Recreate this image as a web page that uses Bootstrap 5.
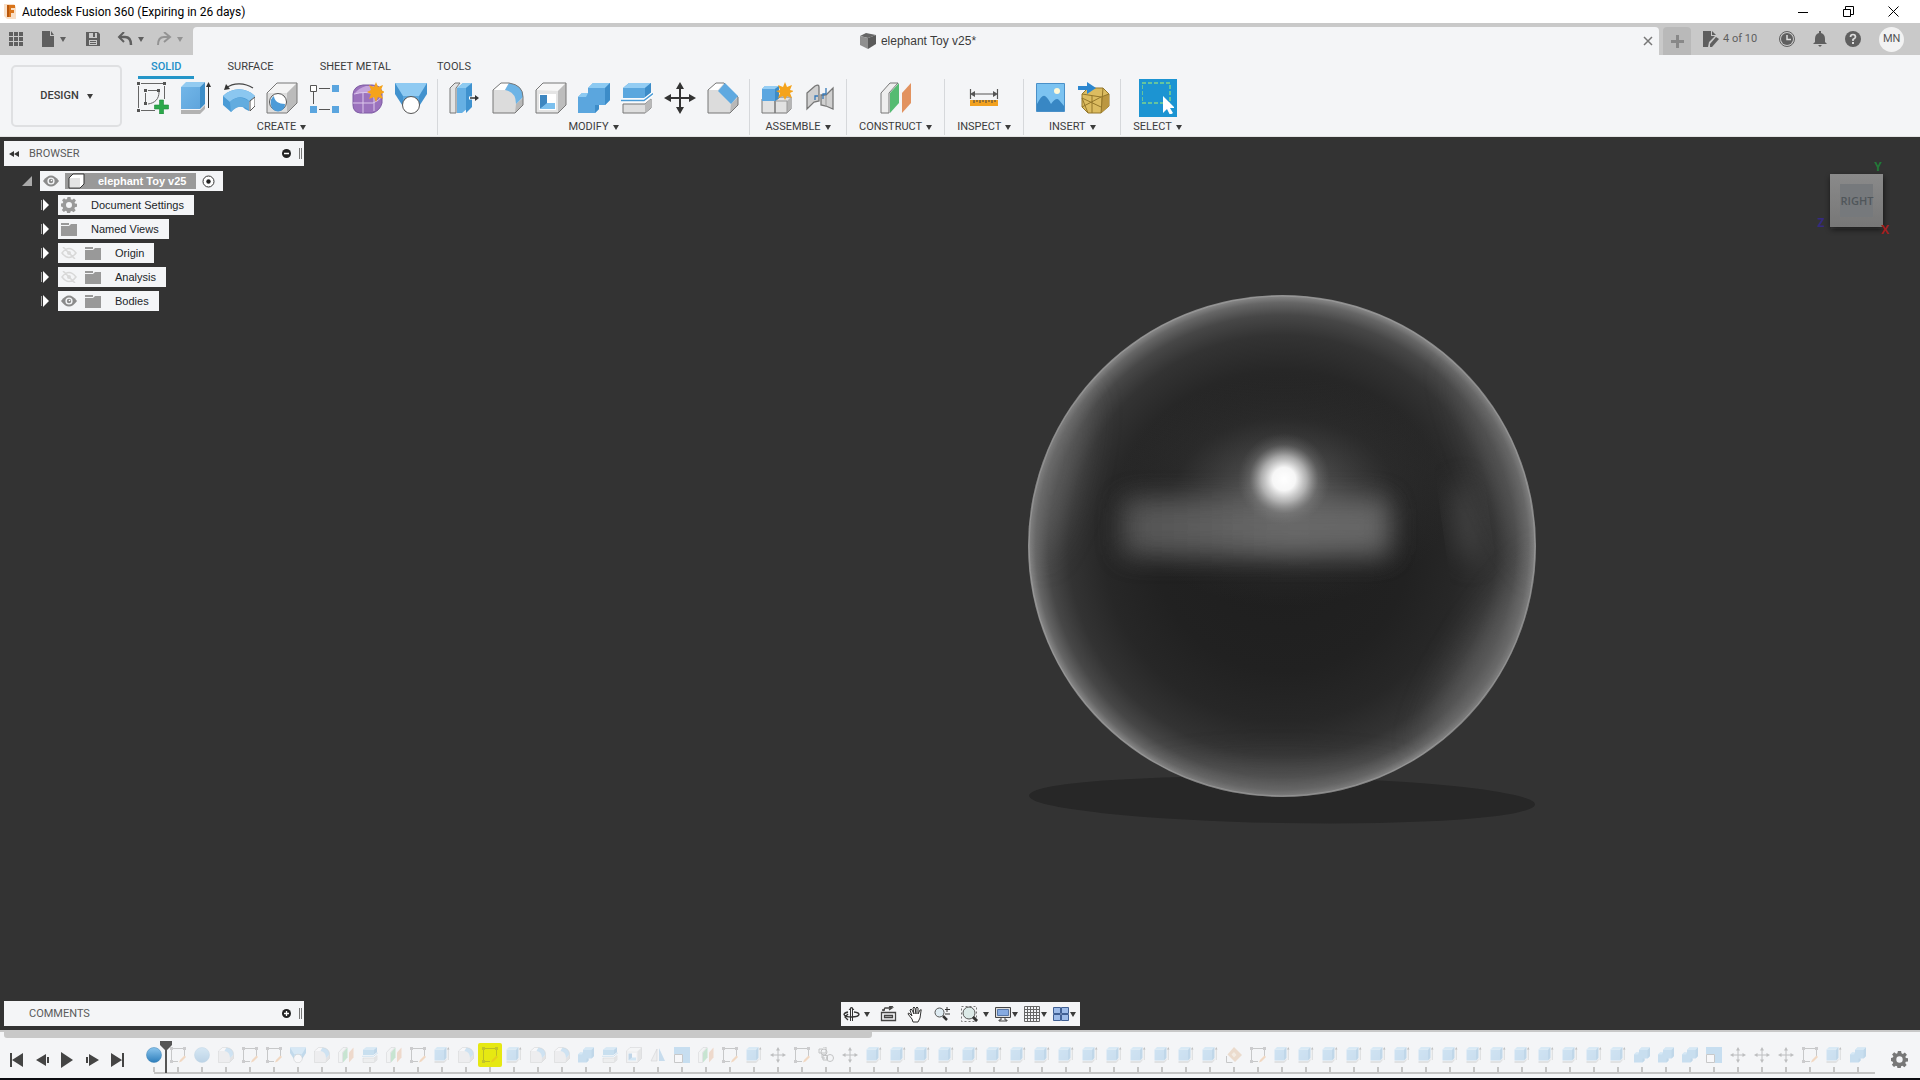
<!DOCTYPE html>
<html lang="en">
<head>
<meta charset="utf-8">
<meta name="viewport" content="width=device-width, initial-scale=1">
<title>Autodesk Fusion 360</title>
<link href="https://cdn.jsdelivr.net/npm/bootstrap@5.3.0/dist/css/bootstrap.min.css" rel="stylesheet">
<style>
body{font-family:Roboto,"Liberation Sans",sans-serif;font-size:11px;line-height:16px;color:#3c3c3c;background:#f4f5f7;overflow:hidden}
svg{display:block;flex:none}
button{border:0;background:none;padding:0;color:inherit;font:inherit}
.tri{display:inline-block;flex:none;width:0;height:0;border:3px solid transparent;border-top:5px solid currentColor;border-bottom:0}
.title-bar{height:23px;background:#fff;color:#000;font-size:12px}
.win-btn{width:45px;height:20px}
.quick-bar{height:32px;background:#c9c9c9;color:#5f5f5f}
.quick-tools{width:193px;padding-left:9px}
.doc-tab{height:28px;background:#f4f5f7;border-radius:4px 4px 0 0;font:12px/16px "Liberation Sans",sans-serif;color:#3c3c3c}
.tab-close{width:16px;color:#777}
.tab-plus{width:28px;height:28px;background:#b9b9b9;border-radius:4px 4px 0 0;color:#888}
.account-tools{width:261px}
.account-icons{gap:18px;padding:4px 0 0 12px}
.avatar{width:25px;height:25px;background:#f2f2f2;font-size:11px;color:#555}
.ribbon{height:82px;background:#f4f5f7;border-bottom:1px solid #e4e4e4}
.design-btn{width:111px;height:62px;border:2px solid #dfe0e2;border-radius:5px;font-weight:500;font-size:11px;margin:10px 4px 0 11px}
.ribbon-tabs{height:24px;gap:20px;padding-left:12px}
.ribbon-tabs .nav-link{padding:4px 13px 1px;color:#3c3c3c;height:24px;border-bottom:3px solid transparent}
.ribbon-tabs .nav-link.active{color:#1f8fc8;border-color:#2596c8;font-weight:500}
.tool-group{padding:0 5px;border-right:1px solid #d6d8db;height:56px;gap:2px}
.tool-group:last-child{border:0}
.tool-btn{width:43px;height:38px}
.tool-btn.chosen{width:38px;background:#1c94d2}
.group-label{padding:0 7px;height:16px}
.stage{background:#333;min-height:0}
.scene{position:absolute;inset:0;width:100%;height:100%}
.panel-bar{width:300px;height:25px;background:#f4f5f7;color:#5a5a5a;padding:0 2px 0 5px}
.panel-name{padding-left:9px}
.panel-name.alone{padding-left:20px}
.grip{width:3px;height:11px;border-left:1px solid #777;border-right:1px solid #777}
.tree{font:11px/16px "Liberation Sans",sans-serif;gap:4px;padding-top:5px}
.tree-row{height:20px;padding-left:25px}
.tree-row.root{padding-left:18px}
.tree-item{height:20px;background:#f4f5f7;padding:0 10px 0 3px;color:#999;gap:14px}
.tree-item.top{padding:0 8px 0 3px;gap:6px}
.chip{background:#999;color:#fff;height:16px;padding:0 10px 0 3px;gap:13px;font-weight:700}
.view-tools{height:24px;background:#f4f5f7;padding:0 4px 0 2px;color:#3c3c3c;gap:6px}
.timeline{height:48px;background:#f4f5f7;border-top:2px solid #c8c8c8}
.scroll-thumb{width:868px;height:6px;background:#c8c8c8;border-radius:0 0 3px 3px;margin-left:4px}
.play-ctl{width:142px;padding:0 18px 0 10px;height:24px;margin-top:10px;color:#444}
.settings-btn{margin:13px 12px 0 auto;color:#777}
.track{padding-top:5px}
.step{width:24px;height:29px;flex:none}
.step svg{opacity:.28;margin:4px}
.step.on svg{opacity:1}
.step .slot{height:24px}
.step.hot .slot{background:#e6e812;border-radius:2px}
.step .tick{width:2px;height:5px;background:#c4c4c4}
.rail{height:2px;background:#c4c4c4;margin:0 -5px 0 12px}
.marker{position:absolute;left:18px;top:3px;z-index:2}
.foot{height:2px;background:#0c0d12}
</style>
<script src="https://cdn.jsdelivr.net/npm/bootstrap@5.3.0/dist/js/bootstrap.bundle.min.js"></script>
</head>
<body class="vh-100 d-flex flex-column">

<svg width="0" height="0" class="position-absolute" aria-hidden="true">
 <defs>
  <linearGradient id="gFront" x1="0" y1="0" x2="1" y2="1"><stop offset="0" stop-color="#72b6e8"/><stop offset="1" stop-color="#5fa5dc"/></linearGradient>
  <linearGradient id="gBall" x1="0" y1="0" x2="0" y2="1"><stop offset="0" stop-color="#8cc6ee"/><stop offset="1" stop-color="#2d7ebc"/></linearGradient>
 </defs>
 <symbol id="i-sketch" viewBox="0 0 32 32"><path d="M4 1.500h22M1.500 4v22M27.500 4v13M4 28.500h14M11 8.500h9M8.500 11v9M22 10c0 7-4 11-11 12" fill="none" stroke="#666" stroke-width="1"/><path d="M0 0h3v3H0zM26 0h3v3h-3zM0 27h3v3H0zM7 7h3v3H7zM20 7h3v3h-3zM7 20h3v3H7z" fill="#555"/><path d="M22.500 18h4v5h5v4h-5v5h-4v-5h-5v-4h5z" fill="#2ba84a" stroke="#1d8a3a" stroke-width=".6"/></symbol>
 <symbol id="i-extrude" viewBox="0 0 32 32"><path d="M1 28h19l5-5v4l-5 5H1z" fill="#b2b2b2"/><path d="M1 5h19v22H1z" fill="url(#gFront)"/><path d="M1 5l5-5h19l-5 5z" fill="#93cbf1"/><path d="M20 5l5-5v22l-5 5z" fill="#3c8dc8"/><path d="M28.500 4v22" stroke="#333" fill="none"/><path d="M26 5l2.500-5L31 5z" fill="#333"/></symbol>
 <symbol id="i-revolve" viewBox="0 0 32 32"><path d="M0 14c9-9 23-9 32 0l-6 6v9l-4-2c-4-4-9-3-14 3l-8-7z" fill="#4a9bd6"/><path d="M0 14c9-9 23-9 32 0l-6 5c-5-5-13-5-19 1z" fill="#8bc7f0"/><path d="M7 20c6-6 13-5 19-1v9c-6-5-12-4-18 2z" fill="#62acdf"/><path d="M27 19l5-4v9l-5 5z" fill="#fff" stroke="#555"/><path d="M3 6C11 0 22 1 30 6" fill="none" stroke="#444" stroke-width="1.200"/><path d="M1 8l2-6 4 5z" fill="#333"/></symbol>
 <symbol id="i-hole" viewBox="0 0 32 32"><path d="M1 11L11 1h20v20L21 31H1z" fill="#ddd"/><path d="M1 11L11 1h20L21 11z" fill="#f4f4f4"/><path d="M21 11L31 1v20L21 31z" fill="#bbb"/><path d="M1 11L11 1h20v20L21 31H1z" fill="none" stroke="#777"/><circle cx="12" cy="20" r="8.500" fill="#fff" stroke="#555"/><path d="M8 14c0 5 5 8 11 8a7 7 0 0 1-14 1c-1-4 0-7 3-9z" fill="#4c9bd8"/></symbol>
 <symbol id="i-pattern" viewBox="0 0 32 32"><path d="M4.500 10v12M10 6.500h11M10 27.500h11" stroke="#555" fill="none"/><path d="M1.500 3.500h6v6h-6z" fill="#fff" stroke="#555"/><path d="M23 3h7v7h-7zM1 24h7v7H1zM23 24h7v7h-7z" fill="#5aa5df"/></symbol>
 <symbol id="i-form" viewBox="0 0 32 32"><path d="M1 12q1-8 10-9h9q10 0 10 9v9q-2 8-10 10H8q-7-1-7-8z" fill="#9b72bd" stroke="#7d5aa3"/><path d="M3 11q4-5 11-7h8q-2 5-7 7z" fill="#c4a4dc"/><path d="M1 21h20q6-2 9-7M11 11v20M2 12q12-3 20 0v17M22 12l6-5" fill="none" stroke="#dcc8ec"/><path d="M24 0l2 5 5-2-2 5 4 2-4 2 2 5-5-2-2 5-2-5-5 2 2-5-4-2 4-2-2-5 5 2z" fill="#f5a31b"/></symbol>
 <symbol id="i-loft" viewBox="0 0 32 32"><path d="M0 1h32v11l-9 14H9L0 12z" fill="#4292ce"/><path d="M0 1h32l-8 13H8z" fill="#8fcaf2"/><path d="M8 14h16v10H8z" fill="#5ca7dd"/><circle cx="16" cy="23" r="8.500" fill="#fff" stroke="#555"/></symbol>
 <symbol id="i-press" viewBox="0 0 32 32"><path d="M1 6l5-5h5L7 6v25H1z" fill="#e4e4e4" stroke="#777"/><path d="M8 6l6-5h9l-4 5v20l-6 5H8z" fill="#66b0e4"/><path d="M8 6l6-5h9l-6 5z" fill="#8ecbf1"/><path d="M17 6l6-5v24l-6 6z" fill="#3f92cf"/><path d="M20 16h8" stroke="#fff" stroke-width="3"/><path d="M21 16h6" stroke="#333" stroke-width="1.500"/><path d="M26 13l4 3-4 3z" fill="#333"/></symbol>
 <symbol id="i-fillet" viewBox="0 0 32 32"><path d="M1 8l8-7h8q14 2 14 14v8l-8 8H1z" fill="#dcdcdc"/><path d="M1 8l8-7h8l-4 7z" fill="#fff"/><path d="M24 22l7-6v7l-8 8z" fill="#b8b8b8"/><path d="M17 1q14 2 14 14l-7 7q0-12-11-14z" fill="#6db4e6"/><path d="M1 8l8-7h8q14 2 14 14v8l-8 8H1z" fill="none" stroke="#777"/></symbol>
 <symbol id="i-shell" viewBox="0 0 32 32"><path d="M1 8l7-7h23v22l-8 8H1z" fill="#e4e4e4"/><path d="M1 8l7-7h23l-8 8z" fill="#f6f6f6"/><path d="M23 9l8-8v22l-8 8z" fill="#bdbdbd"/><path d="M1 8l7-7h23v22l-8 8H1z" fill="none" stroke="#777"/><path d="M4 12h17v16H4z" fill="#fff"/><path d="M5 13h7v9l-7 5z" fill="#3d86c0"/><path d="M5 27l7-6h8v6z" fill="#7cc0ee"/></symbol>
 <symbol id="i-combine" viewBox="0 0 32 32"><path d="M0 15l4-4h6V6l5-5h17v17l-5 5h-6v4l-4 4H0z" fill="#5ba6de"/><path d="M10 6l5-5h17l-5 5zM0 15l4-4h6l-2 4z" fill="#8ccaf2"/><path d="M27 6l5-5v17l-5 5zM17 23h4v4l-4 4z" fill="#3c8cc8"/></symbol>
 <symbol id="i-split" viewBox="0 0 32 32"><path d="M2 22h22l6-5v9l-6 5H2z" fill="#dedede" stroke="#777"/><path d="M24 22l6-5v9l-6 5z" fill="#b9b9b9"/><path d="M2 6l6-5h22v10l-6 5H2z" fill="#5ba7de"/><path d="M2 6l6-5h22l-6 5z" fill="#94cdf3"/><path d="M24 6l6-5v10l-6 5z" fill="#3c8cc8"/><path d="M0 18.500h23l9-7" fill="none" stroke="#fff" stroke-width="4"/><path d="M0 18.500h23l9-7" fill="none" stroke="#4a9bd6" stroke-width="1.500"/></symbol>
 <symbol id="i-move" viewBox="0 0 32 32"><path d="M16 5v22M5 16h22" stroke="#333" stroke-width="2"/><path d="M16 0l4 7h-8zM16 32l4-7h-8zM0 16l7-4v8zM32 16l-7-4v8z" fill="#333"/></symbol>
 <symbol id="i-chamfer" viewBox="0 0 32 32"><path d="M1 8l8-7h8l14 14v8l-8 8H1z" fill="#dcdcdc"/><path d="M1 8l8-7h8l-6 7z" fill="#fff"/><path d="M24 22l7-7v8l-8 8z" fill="#b8b8b8"/><path d="M1 8l8-7h8l14 14v8l-8 8H1z" fill="none" stroke="#777"/><path d="M18 1l13 13-7 8L11 9z" fill="#5fa9e0"/></symbol>
 <symbol id="i-component" viewBox="0 0 32 32"><path d="M1 17h13v14H1zM14 19l5-4h11v12l-4 4H14z" fill="#e2e2e2" stroke="#777"/><path d="M26 19l4-4v12l-4 4z" fill="#b5b5b5"/><path d="M14 19h12v12" fill="none" stroke="#999"/><path d="M1 7l3-3h14v12l-4 3H1z" fill="#5ba6e0"/><path d="M1 7l3-3h14l-4 3z" fill="#96cef4"/><path d="M14 7l4-3v12l-4 3z" fill="#3c8cc8"/><path d="M24 0l2 5 5-2-2 5 4 1-4 2 2 5-5-2-2 4-2-4-5 2 2-5-4-2 4-1-2-5 5 2z" fill="#f5a31b"/></symbol>
 <symbol id="i-joint" viewBox="0 0 32 32"><path d="M3 11l8-7q4-2 4 1v14l-5 1-7 7zM29 6v21l-7-3-5-1V13h5z" fill="#d0d0d0" stroke="#777" stroke-width="1.300"/><path d="M22 13v11" stroke="#999"/><path d="M14 14h-3v4M19 17v-5h3V6" stroke="#3478b8" fill="none" stroke-width="1.300"/></symbol>
 <symbol id="i-plane" viewBox="0 0 32 32"><path d="M1 11L10 1h8L9 11v20H1z" fill="#eee" stroke="#777"/><path d="M10 11l9-10v20l-9 10z" fill="#55bb72"/><path d="M22 11l9-10v20l-9 10z" fill="#e2925f"/></symbol>
 <symbol id="i-measure" viewBox="0 0 32 32"><path d="M2.500 7v10M29.500 7v10M4 12h24" stroke="#555" stroke-width="1.200"/><path d="M2 12l5-3v6zM30 12l-5-3v6z" fill="#555"/><path d="M2 18h28v6H2z" fill="#f2a11f"/><path d="M6 18v3M9 18v2M12 18v3M15 18v2M18 18v3M21 18v2M24 18v3M27 18v2" stroke="#444"/></symbol>
 <symbol id="i-image" viewBox="0 0 32 32"><path d="M1.500 1.500h28v28h-28z" fill="#7cc3f1" stroke="#4a90c8"/><path d="M2 22q5-10 8-8t6 8q5-7 8-4l5 6v5H2z" fill="#3887c4"/><circle cx="22" cy="9" r="3" fill="#fff9d8"/></symbol>
 <symbol id="i-mesh" viewBox="0 0 32 32"><path d="M4 12l6-6h15l6 6v12l-8 7H10l-6-6z" fill="#dcbc60" stroke="#94772a"/><path d="M23 15l8-3v12l-8 7z" fill="#bb9740"/><path d="M4 12l19 3 8-3M25 6l-2 25M4 25l19-10M10 31L4 16l19 9M14 14v17" fill="none" stroke="#94772a"/><path d="M0 4h9V0l9 6-9 6V8H0z" fill="#2c86cf"/></symbol>
 <symbol id="i-select" viewBox="0 0 32 32"><path d="M0 1h28v20H0z" fill="none" stroke="#7fd48c" stroke-width="1.500" stroke-dasharray="4 2"/><path d="M21 14v17l4-4 3 6 3-2-3-5h5z" fill="#fff"/></symbol>
 <symbol id="i-tsketch" viewBox="0 0 32 32"><path d="M5 3h23M3 5v21M29 5v14M5 29h11" fill="none" stroke="#555" stroke-width="2"/><path d="M0 0h6v6H0zM26 0h6v6h-6zM0 26h6v6H0z" fill="#666"/><path d="M18 31l2-5 9-9 3 3-9 9z" fill="#ec8e3b"/></symbol>
 <symbol id="i-ball" viewBox="0 0 32 32"><circle cx="16" cy="16" r="15" fill="url(#gBall)" stroke="#3b80b4"/></symbol>
 <symbol id="i-mirror" viewBox="0 0 32 32"><path d="M14 4v24H2z" fill="#ddd" stroke="#666"/><path d="M18 2v26h12z" fill="#569fd6"/></symbol>
 <symbol id="i-scale" viewBox="0 0 32 32"><path d="M0 0h32v32H18V14H0z" fill="#55a6e0"/><path d="M1 15h16v16H1z" fill="#fff" stroke="#555" stroke-width="2"/></symbol>
 <symbol id="i-group" viewBox="0 0 32 32"><path d="M10 0h6v12H2V4h8M8 14v8h6" fill="none" stroke="#444" stroke-width="2"/><circle cx="12" cy="10" r="6" fill="none" stroke="#444" stroke-width="2"/><circle cx="24" cy="22" r="7" fill="none" stroke="#444" stroke-width="2"/><path d="M10 17h9v9h-9z" fill="none" stroke="#444" stroke-width="2"/></symbol>
 <symbol id="i-decal" viewBox="0 0 32 32"><path d="M16 0l16 16-14 14L3 15z" fill="#d69a62"/><path d="M16 10l5 6-5 5-5-6z" fill="#f2d7b5"/><path d="M1 18v13h12" fill="none" stroke="#555" stroke-width="2"/></symbol>
 <symbol id="i-gear" viewBox="0 0 16 16"><path fill="currentColor" fill-rule="evenodd" d="M6.500 0h3l.4 2.200 1.300.6L13 1.400 15 3.500l-1.500 1.900.5 1.100 2 .3v3l-2.100.4-.5 1.200 1.300 1.800-2.100 2-1.900-1.300-1.200.5-.4 1.900h-3l-.4-2-1.100-.5L2.800 15 .8 13l1.300-1.800-.5-1.200L0 9.500v-3l1.700-.3.6-1.200L1 3.200l2-2 1.900 1.300 1.100-.5zM8 5a3 3 0 1 0 0 6 3 3 0 0 0 0-6z"/></symbol>
 <symbol id="i-folder" viewBox="0 0 16 14"><path fill="currentColor" d="M0 1h8v2H0zM0 4h8l2-2h6v12H0z"/></symbol>
 <symbol id="i-eye" viewBox="0 0 16 12"><path d="M0 6q8-11 16 0-8 11-16 0z" fill="#8b8b8b"/><circle cx="8" cy="6" r="3.600" fill="#f4f5f7"/><circle cx="8" cy="6" r="2.200" fill="#8b8b8b"/><circle cx="8.500" cy="5.500" r=".8" fill="#fff"/></symbol>
 <symbol id="i-eyeoff" viewBox="0 0 16 12"><path d="M1 6q7-9 14 0-7 9-14 0zM2 0l12 12" fill="none" stroke="#d8d8d8" stroke-width="1.500"/><circle cx="8" cy="6" r="2" fill="#d8d8d8"/></symbol>
 <symbol id="i-open" viewBox="0 0 9 12"><path d="M.5 1v10" stroke="#aaa"/><path d="M2 0l6 6-6 6z" fill="#fff"/></symbol>
</svg>

<header>
 <div class="title-bar d-flex align-items-center">
  <svg class="ms-1 me-1" width="14" height="16" viewBox="0 0 14 16"><path d="M0 0h10l2 3v12H3l-3-3z" fill="#f9dfc6"/><path d="M3 1h8v3H7v2h3v3H7v4H3z" fill="#d9741a"/><path d="M3 1h2v12H3z" fill="#b9570b"/></svg>
  <span class="flex-grow-1">Autodesk Fusion 360 (Expiring in 26 days)</span>
  <div class="d-flex me-1">
  <button class="win-btn d-flex align-items-center justify-content-center" aria-label="Minimize"><svg width="11" height="11" viewBox="0 0 11 11"><path d="M0 6.500h10" stroke="#000"/></svg></button>
  <button class="win-btn d-flex align-items-center justify-content-center" aria-label="Restore"><svg width="11" height="11" viewBox="0 0 11 11"><path d="M.5 3.500h7v7h-7zM2.500 3V.5h8v8H8" fill="none" stroke="#000"/></svg></button>
  <button class="win-btn d-flex align-items-center justify-content-center" aria-label="Close"><svg width="11" height="11" viewBox="0 0 11 11"><path d="M.5.5l10 10M10.500.5l-10 10" stroke="#000"/></svg></button>
  </div>
 </div>

 <div class="quick-bar d-flex align-items-end">
  <div class="quick-tools d-flex align-items-center align-self-stretch">
   <button class="me-3" aria-label="Data panel"><svg width="15" height="15" viewBox="0 0 15 15" fill="currentColor"><path d="M0 0h4v4H0zM5 0h4v4H5zM10 0h4v4h-4zM0 5h4v4H0zM5 5h4v4H5zM10 5h4v4h-4zM0 10h4v4H0zM5 10h4v4H5zM10 10h4v4h-4z"/></svg></button>
   <button class="d-flex align-items-center gap-1 me-3" aria-label="File"><svg width="16" height="16" viewBox="0 0 16 16" fill="currentColor"><path d="M2 0h8v5h4v11H2zM11 0l3 4h-3z"/></svg><span class="tri"></span></button>
   <button class="ms-1 me-3" aria-label="Save"><svg width="15" height="15" viewBox="0 0 15 15"><path fill="currentColor" fill-rule="evenodd" d="M0 0h12l2 2v12H0zM3 1v5h8V1zM3 8v5h8V8z"/><path fill="currentColor" d="M7 1h2v4H7zM4 9h6v1H4zM4 11h6v1H4z"/></svg></button>
   <button class="d-flex align-items-center gap-1 me-2" aria-label="Undo"><svg width="17" height="14" viewBox="0 0 17 14"><path d="M2 5h6q6 0 6 8" fill="none" stroke="currentColor" stroke-width="2.500"/><path d="M7 0L2 5l5 5" fill="none" stroke="currentColor" stroke-width="2"/></svg><span class="tri"></span></button>
   <button class="d-flex align-items-center gap-1 opacity-50 ms-1" aria-label="Redo" disabled><svg width="17" height="14" viewBox="0 0 17 14"><path d="M13 5H8q-6 0-6 8M8 0l6 5-6 5" fill="none" stroke="currentColor" stroke-width="2"/></svg><span class="tri"></span></button>
  </div>
  <div class="doc-tab flex-grow-1 d-flex align-items-center">
   <div class="flex-grow-1 d-flex align-items-center justify-content-center gap-1">
    <svg width="17" height="16" viewBox="0 0 17 16"><path d="M0 3l6-3 10 2-8 3z" fill="#666"/><path d="M0 3l8 2v11l-8-4z" fill="#8f8f8f"/><path d="M8 5l8-3v9l-8 5z" fill="#5a5a5a"/></svg>
    <span>elephant Toy v25*</span>
   </div>
   <button class="tab-close" aria-label="Close tab"><svg width="10" height="10" viewBox="0 0 10 10"><path d="M1 1l8 8M9 1L1 9" stroke="currentColor" stroke-width="1.500"/></svg></button>
  </div>
  <div class="account-tools d-flex align-items-end align-self-stretch ps-1">
   <button class="tab-plus d-flex align-items-center justify-content-center" aria-label="New tab"><svg width="13" height="13" viewBox="0 0 13 13"><path d="M6.500 0v13M0 6.500h13" stroke="currentColor" stroke-width="3"/></svg></button>
   <div class="account-icons flex-grow-1 d-flex align-items-center align-self-stretch pt-0">
    <button class="d-flex align-items-center gap-1 me-1"><svg width="16" height="16" viewBox="0 0 16 16"><path fill="currentColor" d="M0 0h8v5h4L6 11l-1 5H0zM9 0l4 4H9zM13 6l3 2-7 8H7v-3z"/></svg><span>4 of 10</span></button>
    <button aria-label="Job status"><svg width="16" height="16" viewBox="0 0 16 16"><circle cx="8" cy="8" r="7.500" fill="none" stroke="currentColor"/><circle cx="8" cy="8" r="6" fill="currentColor"/><path d="M8 4v4.500h4" stroke="#ddd" fill="none" stroke-width="1.500"/></svg></button>
    <button aria-label="Notifications"><svg width="14" height="16" viewBox="0 0 14 16"><path fill="currentColor" d="M6 0h2v2q4 1 4 6v3l2 2H0l2-2V8q0-5 4-6zM5 14h4l-2 2z"/></svg></button>
    <button aria-label="Help"><svg width="16" height="16" viewBox="0 0 16 16"><circle cx="8" cy="8" r="8" fill="currentColor"/><path d="M5.500 6q0-2.500 2.500-2.500T10.500 6Q10.500 7 8 8.500V10" stroke="#ddd" stroke-width="1.700" fill="none"/><path d="M7 11h2v2H7z" fill="#ddd"/></svg></button>
    <button class="avatar rounded-circle">MN</button>
   </div>
  </div>
 </div>

 <div class="ribbon d-flex">
  <button class="design-btn d-flex align-items-center justify-content-center gap-1"><span>DESIGN</span><span class="tri ms-1"></span></button>
  <div class="d-flex flex-column">
   <nav class="nav ribbon-tabs">
    <a class="nav-link active" href="#">SOLID</a><a class="nav-link" href="#">SURFACE</a><a class="nav-link" href="#">SHEET METAL</a><a class="nav-link" href="#">TOOLS</a>
   </nav>
   <div class="d-flex" id="toolGroups"></div>
  </div>
 </div>
</header>

<main class="stage flex-grow-1 position-relative d-flex flex-column justify-content-between">
 <svg class="scene" viewBox="0 0 1920 893" preserveAspectRatio="xMidYMid slice" aria-label="Model view">
  <defs>
   <radialGradient id="sBase"><stop offset="0" stop-color="#1e1e1e"/><stop offset=".5" stop-color="#212121"/><stop offset=".7" stop-color="#272727"/><stop offset=".84" stop-color="#333"/><stop offset=".92" stop-color="#474747"/><stop offset=".97" stop-color="#666"/><stop offset="1" stop-color="#8c8c8c"/></radialGradient>
   <radialGradient id="sSpot"><stop offset="0" stop-color="#fff"/><stop offset=".25" stop-color="#fff" stop-opacity=".95"/><stop offset=".5" stop-color="#e8e8e8" stop-opacity=".6"/><stop offset=".75" stop-color="#bbb" stop-opacity=".17"/><stop offset="1" stop-color="#999" stop-opacity="0"/></radialGradient>
   <radialGradient id="sGlow"><stop offset="0" stop-color="#999" stop-opacity=".6"/><stop offset=".3" stop-color="#888" stop-opacity=".36"/><stop offset=".65" stop-color="#777" stop-opacity=".1"/><stop offset="1" stop-color="#555" stop-opacity="0"/></radialGradient>
   <linearGradient id="sBand"><stop offset="0" stop-color="#575757"/><stop offset=".6" stop-color="#6c6c6c"/><stop offset="1" stop-color="#6a6a6a"/></linearGradient>
   <linearGradient id="cubeFace" x1="0" y1="0" x2="0" y2="1"><stop offset="0" stop-color="#8a8a8a"/><stop offset="1" stop-color="#777"/></linearGradient>
   <filter id="blurM" x="-50%" y="-100%" width="200%" height="300%"><feGaussianBlur stdDeviation="13"/></filter>
   <filter id="blurL" filterUnits="userSpaceOnUse" x="900" y="0" width="800" height="893"><feGaussianBlur stdDeviation="18"/></filter>
   <filter id="blurS" x="-50%" y="-50%" width="200%" height="200%"><feGaussianBlur stdDeviation="3"/></filter>
   <clipPath id="ballClip"><ellipse cx="1282" cy="409" rx="254" ry="251"/></clipPath>
  </defs>
  <ellipse cx="1282" cy="663" rx="253" ry="23" fill="#272727" transform="rotate(1 1282 663)"/>
  <ellipse cx="1282" cy="409" rx="254" ry="251" fill="url(#sBase)"/>
  <g clip-path="url(#ballClip)">
   <ellipse cx="1056" cy="335" rx="18" ry="85" fill="#717171" opacity=".6" filter="url(#blurL)" transform="rotate(14 1056 335)"/>
   <ellipse cx="1492" cy="520" rx="22" ry="110" fill="#707070" opacity=".55" filter="url(#blurL)" transform="rotate(32 1492 520)"/>
   <ellipse cx="1505" cy="330" rx="14" ry="110" fill="#707070" opacity=".5" filter="url(#blurL)" transform="rotate(-22 1505 330)"/>
   <ellipse cx="1280" cy="650" rx="130" ry="18" fill="#666" opacity=".5" filter="url(#blurL)"/>
   <ellipse cx="1285" cy="355" rx="170" ry="115" fill="url(#sGlow)"/>
   <rect x="1122" y="361" width="268" height="58" rx="8" fill="url(#sBand)" opacity=".92" filter="url(#blurM)"/>
   <ellipse cx="1466" cy="385" rx="12" ry="42" fill="#606060" opacity=".5" filter="url(#blurM)" transform="rotate(-8 1466 385)"/>
   <circle cx="1284" cy="342" r="46" fill="url(#sSpot)"/>
  </g>
  <ellipse cx="1282" cy="409" rx="253" ry="250" fill="none" stroke="#aaa" stroke-opacity=".5"/>
 </svg>

 <section class="position-relative ps-1 pt-1" aria-label="Browser">
  <div class="panel-bar d-flex align-items-center">
   <svg width="11" height="8" viewBox="0 0 11 8"><path d="M5 1v6L0 4zM10 1v6L5 4z" fill="#333"/></svg>
   <span class="panel-name flex-grow-1">BROWSER</span>
   <button class="me-2" aria-label="Collapse browser"><svg width="9" height="9" viewBox="0 0 9 9"><circle cx="4.500" cy="4.500" r="4.500" fill="#222"/><path d="M2 4.500h5" stroke="#fff" stroke-width="1.500"/></svg></button><span class="grip"></span>
  </div>
  <div class="tree d-flex flex-column" id="tree">
   <div class="tree-row root d-flex align-items-center">
    <svg width="10" height="10" viewBox="0 0 10 10" class="me-2"><path d="M10 0v10H0z" fill="#aaa"/></svg>
    <div class="tree-item top d-flex align-items-center">
     <svg width="16" height="12"><use href="#i-eye"/></svg>
     <div class="chip d-flex align-items-center"><svg width="17" height="16" viewBox="0 0 17 16"><path d="M1 5l4-4h11v10l-4 4H1z" fill="#fff" stroke="#333"/><path d="M2 5h10v9H2z" fill="#e4e4e4"/></svg><span>elephant Toy v25</span></div>
     <label class="d-flex" aria-label="Activate component"><input type="radio" class="visually-hidden" checked><svg width="13" height="13" viewBox="0 0 13 13"><circle cx="6.500" cy="6.500" r="5.500" fill="#fff" stroke="#333"/><circle cx="6.500" cy="6.500" r="2.200" fill="#222"/></svg></label>
    </div>
   </div>
  </div>
 </section>

 <section class="position-relative d-flex align-items-end ps-1 pb-1" aria-label="Comments">
  <div class="panel-bar d-flex align-items-center">
   <span class="panel-name alone flex-grow-1">COMMENTS</span>
   <button class="me-2" aria-label="Expand comments"><svg width="9" height="9" viewBox="0 0 9 9"><circle cx="4.500" cy="4.500" r="4.500" fill="#222"/><path d="M2 4.500h5M4.500 2v5" stroke="#fff" stroke-width="1.300"/></svg></button><span class="grip"></span>
  </div>
  <div class="position-absolute start-0 end-0 bottom-0 d-flex justify-content-center pb-1 pe-none">
   <div class="view-tools d-flex align-items-center pe-auto">
    <button class="d-flex align-items-center gap-1" aria-label="Orbit"><svg width="17" height="16" viewBox="0 0 17 16"><path d="M7.500 15V2h2v13M6 4l2.500-3L11 4" stroke="#333" fill="none"/><path d="M5 6Q1 7 1 8.500 2 11 8.500 11q7 0 7.500-2.500Q16 6.500 11 6M5 8l-3 3 3 3" stroke="#333" fill="none" stroke-width="1.300"/></svg><span class="tri"></span></button>
    <button class="ms-1" aria-label="Look at"><svg width="17" height="16" viewBox="0 0 17 16"><path d="M1.500 6.500h14v8h-14zM4.500 9.500h8v2h-8zM3 5l2-3h7l-3 2M9 1l4-1M2 4h3" fill="none" stroke="#444" stroke-width="1.300"/></svg></button>
    <button class="ms-1" aria-label="Pan"><svg width="17" height="17" viewBox="0 0 17 17"><path d="M6 16l-1-3-4-5q0-2 2 0l2 2-2-6q1-2 2 0l2 4-1-6q1-2 2 0l1 6V2q1-2 2 0v6l2-4q2-1 1 1l-1 7-2 4z" fill="#fff" stroke="#333"/></svg></button>
    <button class="ms-1" aria-label="Zoom"><svg width="17" height="16" viewBox="0 0 17 16"><circle cx="5.500" cy="6.500" r="4.500" fill="#deebf2" stroke="#555"/><path d="M9 10l4 4" stroke="#333" stroke-width="2.500"/><path d="M13 1v5M11 3.500h5M11 8h5" stroke="#333"/></svg></button>
    <button class="d-flex align-items-center gap-1 ms-1" aria-label="Fit"><svg width="18" height="17" viewBox="0 0 18 17"><path d="M.5.500h15v15H.5z" fill="none" stroke="#777" stroke-dasharray="2 2"/><circle cx="8" cy="7" r="6" fill="#dceae8" stroke="#555"/><path d="M12 11l4 4" stroke="#333" stroke-width="3"/></svg><span class="tri"></span></button>
    <button class="d-flex align-items-center" aria-label="Display settings"><svg width="17" height="16" viewBox="0 0 17 16"><path d="M.5 1.500h15v10H.5z" fill="#ddd" stroke="#444"/><path d="M2.500 3.500h11v6h-11z" fill="#86aae0" stroke="#5878a8"/><path d="M6 12v2H4v1h8v-1h-2v-2" fill="none" stroke="#444"/></svg><span class="tri"></span></button>
    <button class="d-flex align-items-center" aria-label="Grid"><svg width="17" height="16" viewBox="0 0 17 16"><path d="M.5.5h15v15H.5zM3.500 0v16M6.500 0v16M9.500 0v16M12.500 0v16M0 3.500h16M0 6.500h16M0 9.500h16M0 12.500h16" fill="none" stroke="#666"/></svg><span class="tri"></span></button>
    <button class="d-flex align-items-center" aria-label="Viewports"><svg width="17" height="14" viewBox="0 0 17 14"><path d="M.5.500h7v6h-7zM8.500.5h7v6h-7zM.5 7.500h7v6h-7zM8.500 7.500h7v6h-7z" fill="#9dbbe8" stroke="#3f5f94"/></svg><span class="tri"></span></button>
   </div>
  </div>
 </section>

 <svg class="position-absolute top-0 end-0 me-3 mt-3" width="100" height="90" viewBox="0 0 100 90" aria-label="View cube" font-family="Open Sans,sans-serif" font-weight="700">
  <path d="M27 24h52v52H27z" fill="#111" filter="url(#blurS)" opacity=".7"/>
  <path d="M26 21h53v53H26z" fill="url(#cubeFace)"/><path d="M36 31h33v33H36z" fill="#76797c"/>
  <text x="53" y="52" font-size="11" text-anchor="middle" fill="#50565a" font-weight="600">RIGHT</text>
  <text x="74" y="18" text-anchor="middle" font-size="12" fill="#227a38">Y</text>
  <text x="81" y="81" text-anchor="middle" font-size="12" fill="#a51e1e">X</text>
  <text x="17" y="74" text-anchor="middle" font-size="12" fill="#352a80">Z</text>
 </svg>
</main>

<footer>
 <div class="timeline">
  <div class="scroll-thumb"></div>
  <div class="d-flex align-items-start">
   <div class="play-ctl d-flex align-items-center justify-content-between">
    <button aria-label="To start"><svg width="13" height="14" viewBox="0 0 13 14" fill="currentColor"><path d="M0 0h2v14H0zM13 0v14L2 7z"/></svg></button>
    <button aria-label="Step back"><svg width="13" height="12" viewBox="0 0 13 12" fill="currentColor"><path d="M10 0v12L0 6zM11 3h2v6h-2z"/></svg></button>
    <button aria-label="Play"><svg width="12" height="16" viewBox="0 0 12 16" fill="currentColor"><path d="M0 0v16l12-8z"/></svg></button>
    <button aria-label="Step forward"><svg width="13" height="12" viewBox="0 0 13 12" fill="currentColor"><path d="M3 0v12l10-6zM0 3h2v6H0z"/></svg></button>
    <button aria-label="To end"><svg width="13" height="14" viewBox="0 0 13 14" fill="currentColor"><path d="M11 0h2v14h-2zM0 0v14l11-7z"/></svg></button>
   </div>
   <div class="track position-relative">
    <svg class="marker" width="12" height="32" viewBox="0 0 12 32"><path d="M0 0h12v4L7 9v23H5V9L0 4z" fill="#555"/></svg>
    <div class="d-flex" id="steps"></div>
    <div class="d-flex"><div class="rail flex-grow-1"></div></div>
   </div>
   <button class="settings-btn" aria-label="Settings"><svg width="17" height="17" viewBox="0 0 16 16"><use href="#i-gear"/></svg></button>
  </div>
 </div>
 <div class="foot"></div>
</footer>

<script>
const use = (id, w, h = w) => `<svg width="${w}" height="${h}"><use href="#i-${id}"/></svg>`;

// Ribbon panels: caption and the tools that each one holds
const groups = [
  ['CREATE', ['sketch','extrude','revolve','hole','pattern','form','loft']],
  ['MODIFY', ['press','fillet','shell','combine','split','move','chamfer']],
  ['ASSEMBLE', ['component','joint']],
  ['CONSTRUCT', ['plane']],
  ['INSPECT', ['measure']],
  ['INSERT', ['image','mesh']],
  ['SELECT', ['select']]
];
document.getElementById('toolGroups').innerHTML = groups.map(([name, tools]) => `
  <div class="tool-group d-flex flex-column align-items-center">
    <div class="d-flex">${tools.map(t => `<button class="tool-btn d-flex align-items-center justify-content-center${t === 'select' ? ' chosen' : ''}" aria-label="${t}">${use(t, 32)}</button>`).join('')}</div>
    <button class="group-label d-flex align-items-center gap-1">${name}<span class="tri"></span></button>
  </div>`).join('');

// Browser tree below the root component
const rows = [
  ['Document Settings', ['gear']],
  ['Named Views', ['folder']],
  ['Origin', ['eyeoff','folder']],
  ['Analysis', ['eyeoff','folder']],
  ['Bodies', ['eye','folder']]
];
const high = { gear: 16, folder: 14, eye: 12, eyeoff: 12 };
document.getElementById('tree').insertAdjacentHTML('beforeend', rows.map(([label, icons]) => `
  <div class="tree-row d-flex align-items-center">
    <button class="ms-2 ps-1 me-2" aria-label="Expand ${label}">${use('open', 9, 12)}</button>
    <div class="tree-item d-flex align-items-center">
      <span class="d-flex align-items-center gap-2">${icons.map(i => use(i, 16, high[i])).join('')}</span>
      <span class="text-dark">${label}</span>
    </div>
  </div>`).join(''));

// Design history, oldest first
const many = (n, id) => Array(n).fill(id);
const steps = ['ball','tsketch','ball','fillet','tsketch','tsketch','loft','fillet','plane','split','plane','tsketch','extrude','fillet','tsketch',
  'extrude','fillet','fillet','combine','split','shell','mirror','scale','plane','tsketch','extrude','move','tsketch','group','move',
  ...many(15, 'extrude'), 'decal', 'tsketch', ...many(15, 'extrude'), ...many(3, 'combine'), 'scale', ...many(3, 'move'), 'tsketch', 'extrude', 'combine'];
document.getElementById('steps').innerHTML = steps.map((id, i) => `
  <button class="step d-flex flex-column align-items-center${i === 0 ? ' on' : i === 14 ? ' hot' : ''}" aria-label="${id}"><span class="slot">${use(id, 16)}</span><span class="tick"></span></button>`).join('');
</script>
</body>
</html>
